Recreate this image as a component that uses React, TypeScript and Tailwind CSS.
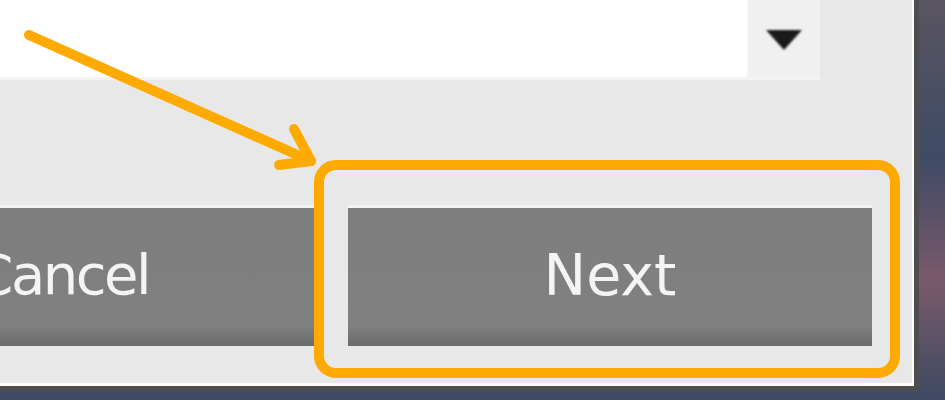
import React from "react";

export default function App() {
  return (
    <div className="relative w-[945px] h-[400px] overflow-hidden bg-[linear-gradient(180deg,#5a5560_0%,#3f4a66_40%,#7a5a6a_70%,#3d4a63_100%)]" style={{ fontFamily: '"DejaVu Sans", sans-serif' }}>
      {/* window frame */}
      <div className="w-[919px] h-[391px] border-r-[5px] border-b-[5px] border-[#4d4d50] bg-[#4d4d50]">
        <div className="w-[914px] h-[386px] border-r-[2px] border-b-[3px] border-[#fcfcfc] flex flex-col bg-[#e8e8e8]">
          {/* combo box row */}
          <div className="h-[80px] w-[820px] bg-white border-b-[3px] border-[#f3f3f3] flex justify-end">
            <div className="w-[74px] h-[77px] bg-[#f0f0f0] border-l-[2px] border-[#fbfbfb] flex items-center justify-center">
              <svg width="42" height="28" viewBox="0 0 42 28" className="blur-[1px]">
                <polygon points="3,5 39,5 21,25" fill="#1a1a1a" />
              </svg>
            </div>
          </div>
          <div className="flex-1" />
          {/* buttons */}
          <div className="flex gap-[33px] h-[141px] mb-[37px]">
            <div className="ml-[-211px] w-[526px] h-full bg-[linear-gradient(180deg,#7e7e7e_0%,#808080_85%,#6b6b6b_100%)] border-t-[3px] border-[#f2f2f2] flex items-center justify-end pr-[166px] pb-[4px]">
              <span className="text-[56px] text-[#f4f4f4] leading-none tracking-[-2.5px]">Cancel</span>
            </div>
            <div className="w-[524px] h-full bg-[linear-gradient(180deg,#7e7e7e_0%,#808080_85%,#6b6b6b_100%)] border-t-[3px] border-[#f2f2f2] flex items-center justify-center pb-[4px]">
              <span className="text-[57px] text-[#f4f4f4] leading-none">Next</span>
            </div>
          </div>
        </div>
      </div>
      {/* annotation: highlight box */}
      <div className="absolute left-[314px] top-[160px] w-[586px] h-[218px] border-[10px] border-[#ffaa00] rounded-[22px]" />
      {/* annotation: arrow */}
      <svg className="absolute left-0 top-0" width="945" height="400" viewBox="0 0 945 400">
        <g stroke="#ffaa00" strokeWidth="10" strokeLinecap="round" strokeLinejoin="round" fill="none">
          <line x1="29" y1="35" x2="311" y2="161" />
          <polyline points="294,129 311,161 279,165" />
        </g>
      </svg>
    </div>
  );
}
